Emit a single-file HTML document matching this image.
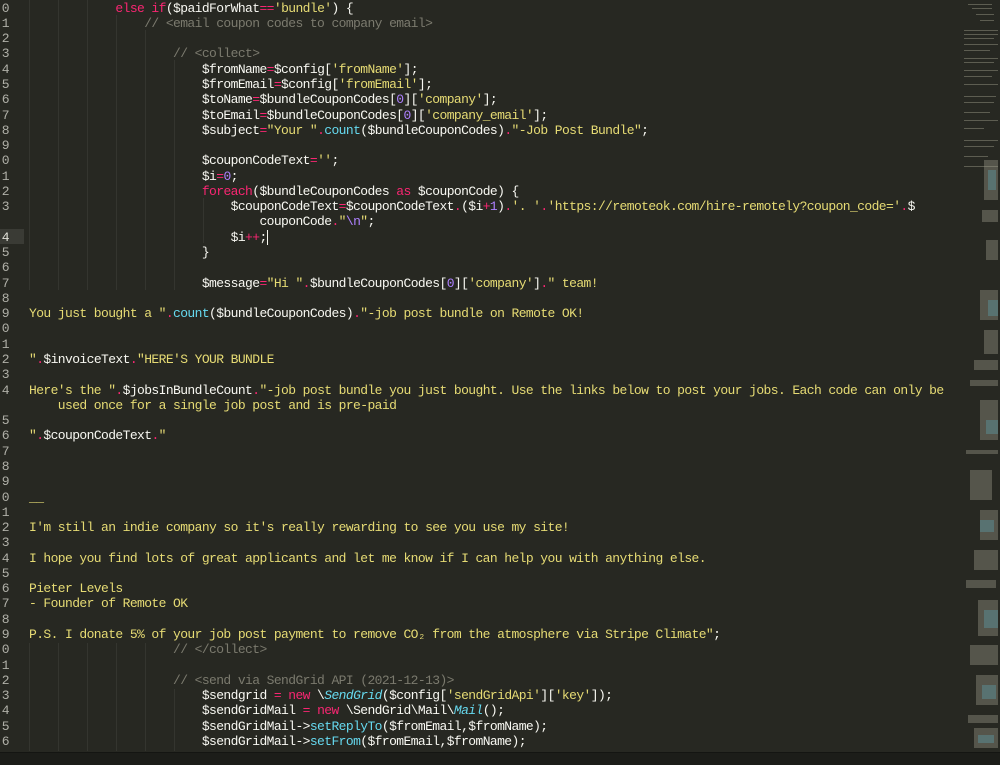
<!DOCTYPE html>
<html><head><meta charset="utf-8">
<style>
html,body{margin:0;padding:0;}
body{width:1000px;height:764px;background:#272822;overflow:hidden;position:relative;font-family:"Liberation Mono",monospace;font-size:13px;letter-spacing:-0.6px;color:#f8f8f2;}
.l{position:absolute;left:29px;height:15.28px;line-height:15.28px;white-space:pre;}
.n{position:absolute;left:0;width:9px;text-align:right;height:15.28px;line-height:15.28px;color:#b0b0a8;}
.p{color:#f92672}.s{color:#e6db74}.c{color:#7b7a6e}.f{color:#66d9ef}.m{color:#ae81ff}.i{color:#66d9ef;font-style:italic}
.g{position:absolute;width:1px;border-left:1px solid #34352f;}
#bar{position:absolute;left:0;top:752px;width:1000px;height:12px;background:#1c1d19;border-top:1px solid #141512;}
</style></head><body>
<div style="position:absolute;left:0;top:229px;width:24px;height:15px;background:#3a3b35"></div>
<div class="g" style="left:29px;top:0;height:290px"></div>
<div class="g" style="left:58px;top:0;height:290px"></div>
<div class="g" style="left:87px;top:0;height:290px"></div>
<div class="g" style="left:116px;top:15px;height:275px"></div>
<div class="g" style="left:145px;top:30px;height:260px"></div>
<div class="g" style="left:174px;top:60px;height:230px"></div>
<div class="g" style="left:203px;top:198px;height:45px"></div>
<div class="g" style="left:29px;top:643px;height:108px"></div>
<div class="g" style="left:58px;top:643px;height:108px"></div>
<div class="g" style="left:87px;top:643px;height:108px"></div>
<div class="g" style="left:116px;top:643px;height:108px"></div>
<div class="g" style="left:145px;top:643px;height:108px"></div>
<div class="g" style="left:174px;top:689px;height:62px"></div>

<div class="n" style="top:0.5px">0</div><div class="l" style="top:0.5px">            <span class="p">else if</span>($paidForWhat<span class="p">==</span><span class="s">'bundle'</span>) {</div>
<div class="n" style="top:15.8px">1</div><div class="l c" style="top:15.8px">                // &lt;email coupon codes to company email&gt;</div>
<div class="n" style="top:31.1px">2</div>
<div class="n" style="top:46.3px">3</div><div class="l c" style="top:46.3px">                    // &lt;collect&gt;</div>
<div class="n" style="top:61.6px">4</div><div class="l" style="top:61.6px">                        $fromName<span class="p">=</span>$config[<span class="s">'fromName'</span>];</div>
<div class="n" style="top:76.9px">5</div><div class="l" style="top:76.9px">                        $fromEmail<span class="p">=</span>$config[<span class="s">'fromEmail'</span>];</div>
<div class="n" style="top:92.2px">6</div><div class="l" style="top:92.2px">                        $toName<span class="p">=</span>$bundleCouponCodes[<span class="m">0</span>][<span class="s">'company'</span>];</div>
<div class="n" style="top:107.5px">7</div><div class="l" style="top:107.5px">                        $toEmail<span class="p">=</span>$bundleCouponCodes[<span class="m">0</span>][<span class="s">'company_email'</span>];</div>
<div class="n" style="top:122.7px">8</div><div class="l" style="top:122.7px">                        $subject<span class="p">=</span><span class="s">"Your "</span><span class="p">.</span><span class="f">count</span>($bundleCouponCodes)<span class="p">.</span><span class="s">"-Job Post Bundle"</span>;</div>
<div class="n" style="top:138px">9</div>
<div class="n" style="top:153.3px">0</div><div class="l" style="top:153.3px">                        $couponCodeText<span class="p">=</span><span class="s">''</span>;</div>
<div class="n" style="top:168.6px">1</div><div class="l" style="top:168.6px">                        $i<span class="p">=</span><span class="m">0</span>;</div>
<div class="n" style="top:183.9px">2</div><div class="l" style="top:183.9px">                        <span class="p">foreach</span>($bundleCouponCodes <span class="p">as</span> $couponCode) {</div>
<div class="n" style="top:199.1px">3</div><div class="l" style="top:199.1px">                            $couponCodeText<span class="p">=</span>$couponCodeText<span class="p">.</span>($i<span class="p">+</span><span class="m">1</span>)<span class="p">.</span><span class="s">'. '</span><span class="p">.</span><span class="s">'https://remoteok.com/hire-remotely?coupon_code='</span><span class="p">.</span>$</div>
<div class="l" style="top:214.4px">                                couponCode<span class="p">.</span><span class="s">"<span class="m">\n</span>"</span>;</div>
<div class="n" style="top:229.7px;color:#e0e0d8">4</div><div class="l" style="top:229.7px">                            $i<span class="p">++</span>;<span style="border-left:1px solid #f8f8f0"></span></div>
<div class="n" style="top:245px">5</div><div class="l" style="top:245px">                        }</div>
<div class="n" style="top:260.3px">6</div>
<div class="n" style="top:275.5px">7</div><div class="l" style="top:275.5px">                        $message<span class="p">=</span><span class="s">"Hi "</span><span class="p">.</span>$bundleCouponCodes[<span class="m">0</span>][<span class="s">'company'</span>]<span class="p">.</span><span class="s">" team!</span></div>
<div class="n" style="top:290.8px">8</div>
<div class="n" style="top:306.1px">9</div><div class="l s" style="top:306.1px">You just bought a "<span class="p">.</span><span class="f">count</span><span style="color:#f8f8f2">($bundleCouponCodes)</span><span class="p">.</span>"-job post bundle on Remote OK!</div>
<div class="n" style="top:321.4px">0</div>
<div class="n" style="top:336.7px">1</div>
<div class="n" style="top:351.9px">2</div><div class="l s" style="top:351.9px">"<span class="p">.</span><span style="color:#f8f8f2">$invoiceText</span><span class="p">.</span>"HERE'S YOUR BUNDLE</div>
<div class="n" style="top:367.2px">3</div>
<div class="n" style="top:382.5px">4</div><div class="l s" style="top:382.5px">Here's the "<span class="p">.</span><span style="color:#f8f8f2">$jobsInBundleCount</span><span class="p">.</span>"-job post bundle you just bought. Use the links below to post your jobs. Each code can only be</div>
<div class="l s" style="top:397.8px">    used once for a single job post and is pre-paid</div>
<div class="n" style="top:413.1px">5</div>
<div class="n" style="top:428.3px">6</div><div class="l s" style="top:428.3px">"<span class="p">.</span><span style="color:#f8f8f2">$couponCodeText</span><span class="p">.</span>"</div>
<div class="n" style="top:443.6px">7</div>
<div class="n" style="top:458.9px">8</div>
<div class="n" style="top:474.2px">9</div>
<div class="n" style="top:489.5px">0</div><div class="l s" style="top:489.5px">__</div>
<div class="n" style="top:504.7px">1</div>
<div class="n" style="top:520px">2</div><div class="l s" style="top:520px">I'm still an indie company so it's really rewarding to see you use my site!</div>
<div class="n" style="top:535.3px">3</div>
<div class="n" style="top:550.6px">4</div><div class="l s" style="top:550.6px">I hope you find lots of great applicants and let me know if I can help you with anything else.</div>
<div class="n" style="top:565.9px">5</div>
<div class="n" style="top:581.1px">6</div><div class="l s" style="top:581.1px">Pieter Levels</div>
<div class="n" style="top:596.4px">7</div><div class="l s" style="top:596.4px">- Founder of Remote OK</div>
<div class="n" style="top:611.7px">8</div>
<div class="n" style="top:627px">9</div><div class="l s" style="top:627px">P.S. I donate 5% of your job post payment to remove CO₂ from the atmosphere via Stripe Climate"<span style="color:#f8f8f2">;</span></div>
<div class="n" style="top:642.3px">0</div><div class="l c" style="top:642.3px">                    // &lt;/collect&gt;</div>
<div class="n" style="top:657.5px">1</div>
<div class="n" style="top:672.8px">2</div><div class="l c" style="top:672.8px">                    // &lt;send via SendGrid API (2021-12-13)&gt;</div>
<div class="n" style="top:688.1px">3</div><div class="l" style="top:688.1px">                        $sendgrid <span class="p">=</span> <span class="p">new</span> \<span class="i">SendGrid</span>($config[<span class="s">'sendGridApi'</span>][<span class="s">'key'</span>]);</div>
<div class="n" style="top:703.4px">4</div><div class="l" style="top:703.4px">                        $sendGridMail <span class="p">=</span> <span class="p">new</span> \SendGrid\Mail\<span class="i">Mail</span>();</div>
<div class="n" style="top:718.7px">5</div><div class="l" style="top:718.7px">                        $sendGridMail-&gt;<span class="f">setReplyTo</span>($fromEmail,$fromName);</div>
<div class="n" style="top:733.9px">6</div><div class="l" style="top:733.9px">                        $sendGridMail-&gt;<span class="f">setFrom</span>($fromEmail,$fromName);</div>

<svg style="position:absolute;left:960px;top:0" width="40" height="752">
<g fill="#8a8a78" opacity="0.55">
<rect x="8" y="4" width="24" height="1"/><rect x="12" y="8" width="20" height="1"/><rect x="16" y="14" width="18" height="1"/><rect x="20" y="20" width="14" height="1"/>
<rect x="4" y="30" width="34" height="1"/><rect x="4" y="34" width="34" height="1"/><rect x="4" y="38" width="30" height="1"/><rect x="4" y="44" width="34" height="1"/><rect x="4" y="50" width="26" height="1"/>
<rect x="4" y="58" width="34" height="1"/><rect x="4" y="62" width="30" height="1"/><rect x="4" y="70" width="34" height="1"/><rect x="4" y="76" width="28" height="1"/><rect x="4" y="84" width="34" height="1"/>
<rect x="4" y="96" width="32" height="1"/><rect x="4" y="102" width="30" height="1"/><rect x="4" y="112" width="26" height="1"/><rect x="4" y="120" width="34" height="1"/><rect x="4" y="128" width="20" height="1"/>
<rect x="4" y="140" width="34" height="1"/><rect x="4" y="146" width="30" height="1"/><rect x="4" y="156" width="24" height="1"/><rect x="4" y="166" width="34" height="1"/>
</g>
<g fill="#9a9a88" opacity="0.4">
<rect x="24" y="160" width="14" height="40"/><rect x="22" y="210" width="16" height="12"/><rect x="26" y="240" width="12" height="20"/>
<rect x="20" y="290" width="18" height="30"/><rect x="24" y="330" width="14" height="24"/><rect x="14" y="360" width="24" height="10"/>
<rect x="10" y="380" width="28" height="6"/><rect x="20" y="400" width="18" height="40"/><rect x="6" y="450" width="32" height="4"/>
<rect x="10" y="470" width="22" height="30"/><rect x="20" y="510" width="18" height="30"/><rect x="14" y="550" width="24" height="20"/>
<rect x="6" y="580" width="30" height="8"/><rect x="18" y="600" width="20" height="36"/><rect x="10" y="645" width="28" height="20"/>
<rect x="16" y="675" width="22" height="30"/><rect x="8" y="715" width="30" height="8"/><rect x="14" y="728" width="24" height="20"/>
</g>
<g fill="#5fa8b8" opacity="0.35">
<rect x="28" y="170" width="8" height="20"/><rect x="28" y="300" width="10" height="16"/><rect x="26" y="420" width="12" height="14"/>
<rect x="20" y="520" width="14" height="12"/><rect x="24" y="610" width="14" height="18"/><rect x="22" y="685" width="14" height="14"/><rect x="18" y="735" width="16" height="8"/>
</g>
</svg>
<div id="bar"></div>
</body></html>
